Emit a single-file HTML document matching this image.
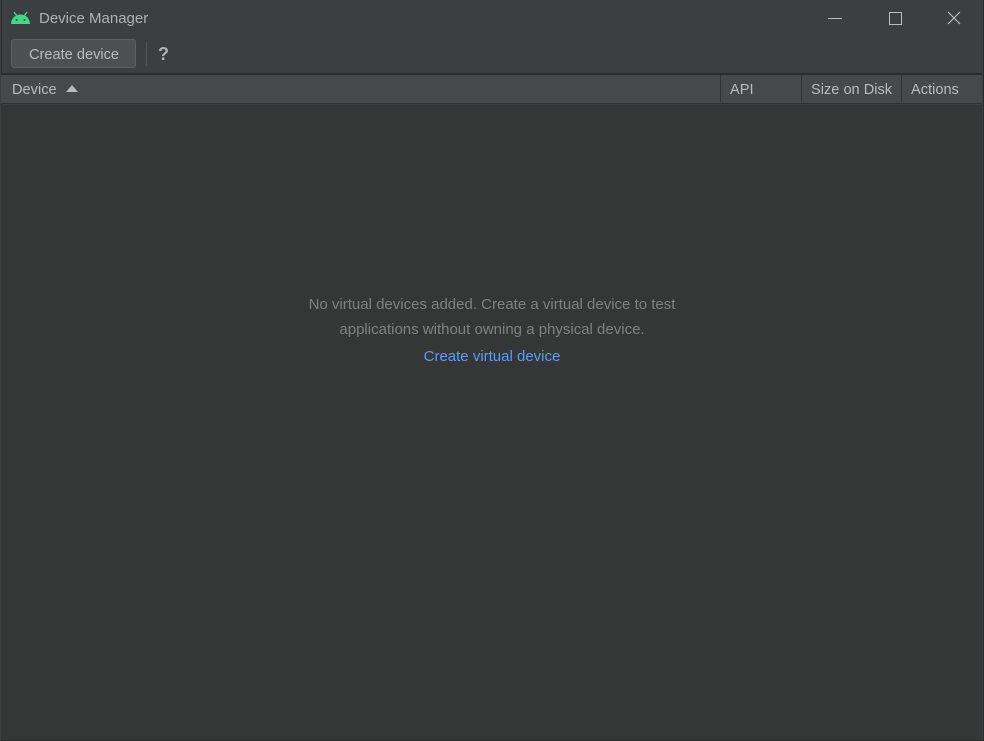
<!DOCTYPE html>
<html><head><style>
body{margin:0;width:984px;height:741px;background:#3c3f41;overflow:hidden;font-family:"Liberation Sans",sans-serif;position:relative}
.win{position:absolute;left:1px;top:0;width:981px;height:740px;background:#3c3f41;border-left:1px solid #2b2b2b;border-right:1px solid #2b2b2b;border-bottom:1px solid #2b2b2b}
.t{position:absolute;color:#bbbbbb;font-size:14px;white-space:nowrap}
.btn{position:absolute;left:11px;top:39px;width:125px;height:29px;border:1px solid #5e6060;border-radius:3px;background:#4c5052;box-sizing:border-box}
.hdr{position:absolute;left:1px;top:73px;width:981px;height:31px;background:#45494a;border-top:2px solid #2b2b2b;border-bottom:1px solid #323232;box-sizing:border-box}
.sep{position:absolute;top:75px;width:1px;height:27px;background:#323232}
.body{position:absolute;left:1px;top:105px;width:981px;height:635px;background:#353737}
</style></head><body>
<div class="win"></div>
<svg style="position:absolute;left:10px;top:11px" width="21" height="13" viewBox="0 0 21 13"><path d="M1 13 A9.5 9.5 0 0 1 20 13Z" fill="#3ddc84"/><line x1="4" y1="1" x2="6.5" y2="4.5" stroke="#3ddc84" stroke-width="1.4"/><line x1="17" y1="1" x2="14.5" y2="4.5" stroke="#3ddc84" stroke-width="1.4"/><circle cx="6.5" cy="9" r="1" fill="#3c3f41"/><circle cx="14.5" cy="9" r="1" fill="#3c3f41"/></svg>
<div class="t" style="left:39px;top:10px;color:#afb1b3;font-size:15px">Device Manager</div>
<div style="position:absolute;left:828px;top:18px;width:14px;height:1px;background:#bbb"></div>
<div style="position:absolute;left:889px;top:12px;width:11px;height:11px;border:1px solid #bbb"></div>
<svg style="position:absolute;left:947px;top:11px" width="14" height="14"><path d="M1 1L13 13M13 1L1 13" stroke="#bbb" stroke-width="1.2"/></svg>
<div class="btn"></div>
<div class="t" style="left:29px;top:47px;font-size:14.6px">Create device</div>
<div style="position:absolute;left:146px;top:42px;width:1px;height:24px;background:#555"></div>
<div class="t" style="left:158px;top:44px;font-size:18px;font-weight:bold;color:#afb1b3">?</div>
<div class="hdr"></div>
<div class="sep" style="left:720px"></div><div class="sep" style="left:801px"></div><div class="sep" style="left:901px"></div>
<div class="t" style="left:12px;top:82px;font-size:14.6px">Device</div>
<svg style="position:absolute;left:66px;top:85px" width="12" height="7"><path d="M0 7L6 0L12 7Z" fill="#bbb"/></svg>
<div class="t" style="left:730px;top:82px;font-size:14.6px">API</div>
<div class="t" style="left:811px;top:82px;font-size:14.6px">Size on Disk</div>
<div class="t" style="left:911px;top:82px;font-size:14.6px">Actions</div>
<div class="body"></div>
<div class="t" style="left:0;width:984px;text-align:center;top:296px;color:#7f8282;font-size:15px">No virtual devices added. Create a virtual device to test</div>
<div class="t" style="left:0;width:984px;text-align:center;top:321px;color:#7f8282;font-size:15px">applications without owning a physical device.</div>
<div class="t" style="left:0;width:984px;text-align:center;top:348px;color:#589df6;font-size:15px">Create virtual device</div>
</body></html>
